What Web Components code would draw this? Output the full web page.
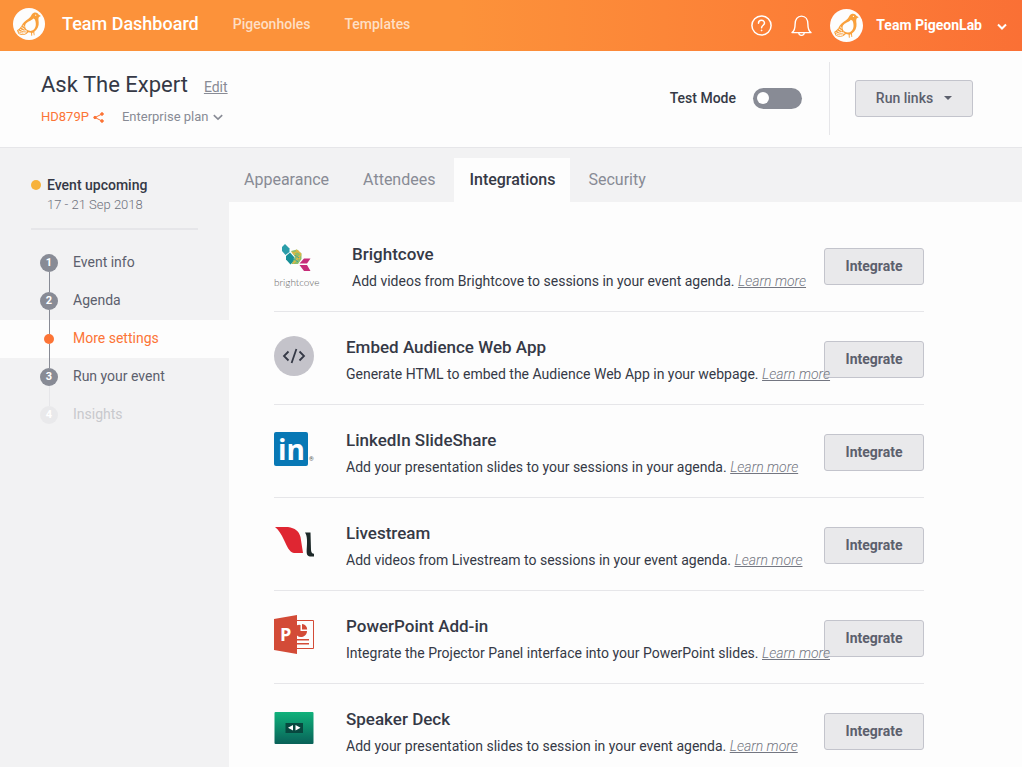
<!DOCTYPE html>
<html lang="en">
<head>
<meta charset="utf-8">
<title>Ask The Expert – Integrations</title>
<style>
html{scrollbar-width:none}
body{margin:0;font-family:Roboto,"Liberation Sans",sans-serif;font-size:14px;color:#353946;background:#fdfdfd;
--accent:#fc7436;--grey:#888b95;--canvas:#f2f2f3;--line:#e6e6e9;--paper:#fdfdfd}
</style>
</head>
<body>
<team-dashboard></team-dashboard>

<template id="t-bird">
<style>:host{display:block;flex:none;width:var(--size,32px);height:var(--size,32px)}svg{display:block;width:100%;height:100%}</style>
<svg viewBox="0 0 32 32" aria-hidden="true">
<circle cx="16" cy="16" r="16" fill="#fdfdfd"/>
<path fill="#f9a03c" d="M27.9 7.9 25.6 6.6C24.8 4.8 22.7 4.1 20.9 4.8 18.8 5.5 18.6 7.6 17.3 9.1 15.2 11.5 11.4 12.9 9.5 16.1 8 18.8 7 20.7 4 22.3L5.2 25.4C7.9 27.3 11.2 27.4 13.4 25.9L15.4 24.3 18 24.7 18.3 27.8H19.2L19.1 24.9 20.3 24.4 20.8 27.2H21.6L21.3 23.8C24.6 21.5 26 18 25.7 14.3 25.5 12 25.1 10.3 26 8.9Z"/>
<path fill="#fdfdfd" d="M21.9 11.4C24 16.8 22.6 22.4 17.4 22.9 13 22.8 11.2 19.1 12.6 16.1 14.2 13.2 18.2 13.1 20.2 10.4Z"/>
<path fill="none" stroke="#fdfdfd" stroke-width=".9" d="M5.4 22.8C8.2 24.6 11 24.9 14 23.7M7.1 21.2C9.2 23 11.4 23.2 13.4 22.5M8.4 19.2 11.6 21.4M9.8 17.3 11.5 18.7M5.8 24.7C8.2 26 10.5 26 12.6 25.1"/>
<circle cx="22.7" cy="7.2" r=".6" fill="#fdfdfd"/>
</svg>
</template>

<template id="t-header">
<style>
:host{display:flex;align-items:center;height:51px;padding:0 15px 0 13px;box-sizing:border-box;color:#fff;background:linear-gradient(90deg,#fc923a 45%,#fc7a36 85%,#fa7035)}
a{color:inherit;text-decoration:none;white-space:nowrap}
.brand{font-size:18px;line-height:24px;font-weight:500;margin:0 34px 4px 17px}
nav{display:flex;gap:34px;margin-bottom:4px}
nav a{font-size:14px;line-height:20px;font-weight:500;color:#fedfc4}
.right{margin-left:auto;display:flex;align-items:center}
button{background:none;border:0;padding:0;color:inherit;font:inherit;display:flex;align-items:center}
svg{display:block;fill:none;stroke:currentColor}
.help{margin-right:19px}.bell{margin-right:18px}
.account{font-size:14px;line-height:20px;font-weight:700;gap:13px}
.account span{white-space:nowrap;padding-bottom:2px}
.account svg{margin:2px 0 0 2px}
x-bird{--size:33px}
.brandbird{--size:32px;margin-bottom:3px}
</style>
<x-bird class="brandbird"></x-bird>
<a class="brand" href="#">Team Dashboard</a>
<nav><a href="#">Pigeonholes</a><a href="#">Templates</a></nav>
<div class="right">
<button class="help" aria-label="Help"><svg width="21" height="21" viewBox="0 0 21 21" stroke-width="1.5"><circle cx="10.5" cy="10.5" r="9.6"/><path d="M7.5 8.2C7.5 4.4 13.5 4.4 13.5 8.1 13.5 10.3 10.6 10.2 10.6 12.8" stroke-linecap="round"/><circle cx="10.6" cy="15.4" r=".5" fill="currentColor" stroke-width=".8"/></svg></button>
<button class="bell" aria-label="Notifications"><svg width="21" height="21" viewBox="0 0 21 21" stroke-width="1.4" stroke-linejoin="round"><path d="M1 17.6C3.7 15.7 4.1 13.7 4.1 9.2 4.1 4.5 6.4 1.1 10.5 1.1S16.9 4.5 16.9 9.2C16.9 13.7 17.3 15.7 20 17.6Z"/><path d="M7.7 17.8C7.9 21.2 13.1 21.2 13.3 17.8"/></svg></button>
<button class="account"><x-bird></x-bird><span>Team PigeonLab</span><svg width="10" height="8" viewBox="0 0 10 8" stroke-width="2"><path d="m1 1.5 4 4 4-4"/></svg></button>
</div>
</template>

<template id="t-eventbar">
<style>
:host{display:flex;align-items:center;justify-content:space-between;height:97px;box-sizing:border-box;padding:0 49px 2px 41px;background:var(--paper);border-bottom:1px solid var(--line)}
h1{margin:0;font-size:22px;line-height:28px;font-weight:400}
.top{display:flex;align-items:baseline;gap:16px;padding-top:2px}
.edit{font-size:14px;color:var(--grey)}
.sub{display:flex;align-items:center;gap:18px;margin-top:8px;font-size:13px;line-height:20px}
a,button{white-space:nowrap}
.code{color:var(--accent);text-decoration:none;display:flex;align-items:center;gap:4px}
.plan{background:none;border:0;padding:0;color:var(--grey);font:inherit;display:flex;align-items:center;gap:5px}
svg{display:block}
.right{display:flex;align-items:center}
label{display:flex;align-items:center;gap:17px;font-weight:500;font-size:14px;white-space:nowrap}
input{appearance:none;margin:0;width:49px;height:21px;border-radius:11px;background:var(--grey);display:flex;align-items:center;padding:0 4px;box-sizing:border-box}
input::before{content:"";width:12px;height:12px;border-radius:50%;background:#fff}
input:checked{justify-content:flex-end;background:var(--accent)}
.rule{width:1px;height:73px;background:var(--line);margin:0 25px 0 27px}
.run{width:118px;height:37px;border:1px solid #c3c4cc;border-radius:3px;background:#e9e9eb;color:#5c606d;font:500 14px/20px Roboto,sans-serif;display:flex;align-items:center;justify-content:center;gap:11px}
</style>
<div>
<div class="top"><h1>Ask The Expert</h1><a class="edit" href="#">Edit</a></div>
<div class="sub"><a class="code" href="#">HD879P <svg width="11" height="11" viewBox="0 0 11 11" fill="currentColor" stroke="currentColor"><path fill="none" d="M9 2 2 5.5 9 9"/><circle cx="9" cy="2" r="1.3"/><circle cx="2" cy="5.5" r="1.2"/><circle cx="9" cy="9" r="1.3"/></svg></a>
<button class="plan">Enterprise plan <svg width="10" height="7" viewBox="0 0 10 7" fill="none" stroke="currentColor" stroke-width="1.6"><path d="m.8 1.2 4.2 4 4.2-4"/></svg></button></div>
</div>
<div class="right">
<label for="test">Test Mode <input id="test" type="checkbox" role="switch"></label>
<div class="rule"></div>
<button class="run">Run links <svg width="8" height="4" viewBox="0 0 8 4"><path fill="currentColor" d="M0 0H8L4 4Z"/></svg></button>
</div>
</template>

<template id="t-sidebar">
<style>
:host{display:block;background:var(--canvas)}
.status{margin:27px 31px 14px;padding-bottom:13px;border-bottom:2px solid var(--line);display:grid;grid-template-columns:10px 1fr;column-gap:6px;align-items:center;line-height:20px}
.status i{width:10px;height:10px;border-radius:50%;background:#f7b23b}
.status b{font-weight:500;white-space:nowrap}
.status time{grid-column:2;font-size:13px;font-weight:300;color:#6e717c}
ol{list-style:none;margin:0;padding:0}
</style>
<div class="status"><i></i><b>Event upcoming</b><time>17 - 21 Sep 2018</time></div>
<ol>
<step-item n="1">Event info</step-item>
<step-item n="2">Agenda</step-item>
<step-item active>More settings</step-item>
<step-item n="3">Run your event</step-item>
<step-item n="4" disabled>Insights</step-item>
</ol>
</template>

<template id="t-step">
<style>
:host{display:block;--dot:var(--grey);--ink:#5c606d}
:host([active]){background:var(--paper);--dot:var(--accent);--ink:var(--accent)}
:host([disabled]){--dot:#e9e9eb;--ink:#c8c9cd}
a{display:grid;grid-template-columns:18px 1fr;column-gap:15px;height:38px;padding-left:40px;color:var(--ink);text-decoration:none;font-size:14px;line-height:36px}
.rail{display:flex;flex-direction:column;align-items:center}
.rail::before,.rail::after{content:"";width:1px;flex:1;background:var(--grey)}
:host([n="1"]) .rail::before,:host([n="4"]) .rail::after{background:none}
:host([n="3"]) .rail::after,:host([n="4"]) .rail::before{background:var(--line)}
.dot{flex:none;width:18px;height:18px;border-radius:50%;background:var(--dot);color:#fff;font-size:11px;font-weight:700;line-height:18px;text-align:center}
:host([active]) .dot{width:10px;height:10px}
</style>
<a href="#"><span class="rail"><span class="dot"></span></span><slot></slot></a>
</template>

<template id="t-tabs">
<style>
:host{display:flex;background:var(--canvas);padding:10px 0 0}
a{padding:0 19px 0 15px;height:44px;line-height:44px;font-size:16px;color:var(--grey);text-decoration:none;white-space:nowrap}
a[aria-current]{font-weight:500;color:#353946;background:var(--paper);padding:0 15px;margin-right:3px}
</style>
<a href="#">Appearance</a><a href="#">Attendees</a><a href="#" aria-current="page">Integrations</a><a href="#">Security</a>
</template>

<template id="t-row">
<style>
:host{display:flex;height:92px;border-bottom:1px solid var(--line)}
.icon{flex:none;height:88px;display:flex;align-items:center;margin-right:32px}
.text{flex:1;min-width:0;padding-top:23px;white-space:nowrap;position:relative;z-index:1}
h2{margin:0 0 5px;font-size:17px;line-height:24px;font-weight:500}
p{margin:0;font-size:14px;line-height:20px}
p a{color:#737681;font-style:italic;font-weight:300}
button{flex:none;width:100px;height:37px;padding:0 0 2px;margin-top:29px;border:1px solid #c3c4cc;border-radius:3px;background:#e9e9eb;color:#5c606d;font:700 14px/20px Roboto,sans-serif}
</style>
<div class="icon"><slot name="icon"></slot></div>
<div class="text"><h2><slot name="title"></slot></h2><p><slot></slot> <a href="#">Learn more</a></p></div>
<button>Integrate</button>
</template>

<template id="t-list">
<style>
:host{display:block;max-width:650px;padding:17px 98px 0 45px;background:var(--paper)}
svg{display:block;overflow:visible}
</style>
<integration-row><svg slot="icon" width="46" height="50" viewBox="0 0 46 50">
<path fill="#2b9da9" d="m11 6 4.5 4.5v3.5L11.500 17 8 13V9z"/><path fill="#168f97" d="m12 18 4-3.500 4.500 5-.5 3.500-3.500 3.500L12 21.500z"/>
<path fill="#8fbd69" d="m17 13 6-1.500 4.500 4V21L24 26h-6.500l3.500-7z"/><path fill="none" stroke="#e2b743" stroke-width="1.3" d="m18 14 8 7M22 12l5 4M19 25.500l8-9M20 15l5-2"/><path fill="none" stroke="#39a59a" d="m19 20 5 4M21 17l4 3"/>
<path fill="#c72c78" d="m25.500 25.500 4.500-5h6.500l-3.500 5zM25.500 27H33l3.500 6H30z"/>
<text x="0" y="48" font-family="Lato,sans-serif" font-size="10" font-weight="300" fill="#666">brightcove</text></svg><span slot="title">Brightcove</span>Add videos from Brightcove to sessions in your event agenda.</integration-row>
<integration-row><svg slot="icon" width="40" height="40" viewBox="0 0 40 40"><circle cx="20" cy="20" r="20" fill="#c4c3ca"/><path fill="none" stroke="#353946" stroke-width="1.8" d="m14.5 15.5-4.5 4.5 4.5 4.5M25.5 15.5l4.5 4.5-4.5 4.5M22.4 13 17.6 27"/></svg><span slot="title">Embed Audience Web App</span>Generate HTML to embed the Audience Web App in your webpage.</integration-row>
<integration-row><svg slot="icon" width="40" height="34" viewBox="0 0 40 34"><rect width="34" height="34" rx="2" fill="#0878b5"/><text x="4" y="28" font-family="Open Sans,sans-serif" font-size="28" font-weight="700" fill="#fff">in</text><text x="35" y="29" font-family="Roboto,sans-serif" font-size="6" fill="#555">®</text></svg><span slot="title">LinkedIn SlideShare</span>Add your presentation slides to your sessions in your agenda.</integration-row>
<integration-row><svg slot="icon" width="40" height="30" viewBox="0 0 40 30"><path fill="#df2632" d="M1 0H14C21 1 25 4 26.5 10L29 26H20C15 25 13 19 10 13 7 7 5 3 1 0Z"/><path fill="#1d2929" d="M31 5.5H36.5L37 23C37.2 25.5 38 26.5 40 26.8V29.5H36C33 29.2 32.4 26.5 32.7 22.5 33.2 15 33.5 9 31 5.5Z"/></svg><span slot="title">Livestream</span>Add videos from Livestream to sessions in your event agenda.</integration-row>
<integration-row><svg slot="icon" width="40" height="40" viewBox="0 0 40 40"><path fill="#fdfdfd" stroke="#d34b37" d="M22 5.5H39.5V33.5H22Z"/><path fill="#d34b37" d="M0 4 23 0V39L0 35ZM23 10.2A6 6 0 0 1 26.5 10V16H33A6 6 0 0 1 23 20.5ZM28 9A6 6 0 0 1 33.2 14.5H28ZM23 24H35V25.5H23ZM23 28H35V29.5H23Z"/><text x="6" y="26" font-family="Open Sans,sans-serif" font-size="18" font-weight="700" fill="#fff">P</text></svg><span slot="title">PowerPoint Add-in</span>Integrate the Projector Panel interface into your PowerPoint slides.</integration-row>
<integration-row><svg slot="icon" width="40" height="32" viewBox="0 0 40 32"><defs><linearGradient id="deck" x2="0" y2="1"><stop stop-color="#10b27b"/><stop offset="1" stop-color="#096158"/></linearGradient></defs><rect x=".5" width="39" height="32" rx="1" fill="url(#deck)"/><path fill="#07483f" d="M11.5 11H29V21H11.5Z"/><path fill="#fff" d="M19 13V18.5L14 15.8ZM21.5 13V18.5L26.5 15.8Z"/></svg><span slot="title">Speaker Deck</span>Add your presentation slides to session in your event agenda.</integration-row>
</template>

<template id="t-dashboard">
<style>
:host{display:flex;flex-direction:column;min-height:100vh}
.body{flex:1;display:grid;grid-template-columns:229px minmax(0,1fr)}
main{background:var(--paper)}
</style>
<app-header></app-header>
<event-bar></event-bar>
<div class="body"><event-sidebar></event-sidebar><main><settings-tabs></settings-tabs><integration-list></integration-list></main></div>
</template>

<script>
class Base extends HTMLElement{
  constructor(){
    super();
    const t=document.getElementById(this.constructor.template);
    this.attachShadow({mode:"open"}).append(document.importNode(t.content,true));
  }
}
class XBird extends Base{static template="t-bird"}
class AppHeader extends Base{static template="t-header"}
class EventBar extends Base{static template="t-eventbar"}
class EventSidebar extends Base{static template="t-sidebar"}
class StepItem extends Base{
  static template="t-step";
  connectedCallback(){
    this.setAttribute("role","listitem");
    this.shadowRoot.querySelector(".dot").textContent=this.getAttribute("n")||"";
  }
}
class SettingsTabs extends Base{static template="t-tabs"}
class IntegrationRow extends Base{static template="t-row"}
class IntegrationList extends Base{static template="t-list"}
class TeamDashboard extends Base{static template="t-dashboard"}
customElements.define("x-bird",XBird);
customElements.define("app-header",AppHeader);
customElements.define("event-bar",EventBar);
customElements.define("step-item",StepItem);
customElements.define("event-sidebar",EventSidebar);
customElements.define("settings-tabs",SettingsTabs);
customElements.define("integration-row",IntegrationRow);
customElements.define("integration-list",IntegrationList);
customElements.define("team-dashboard",TeamDashboard);
</script>
</body>
</html>
